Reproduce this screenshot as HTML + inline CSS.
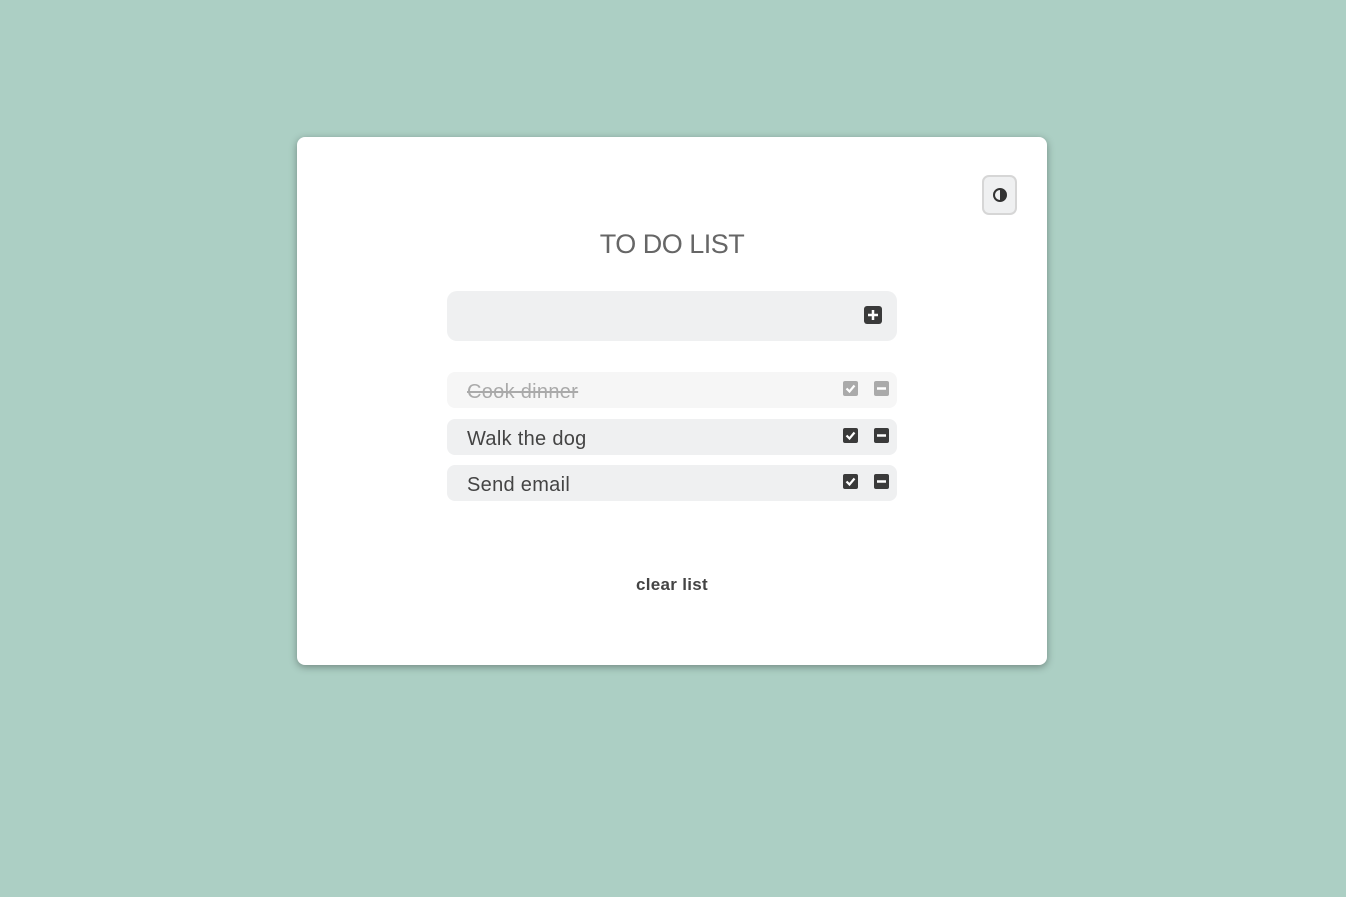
<!DOCTYPE html>
<html><head><style>
body{margin:0;background:#accfc4;width:1346px;height:897px;position:relative;font-family:"Liberation Sans",sans-serif;}
.card{position:absolute;left:297px;top:137px;width:750px;height:528px;background:#fff;border-radius:8px;box-shadow:0 2px 8px rgba(0,0,0,.35);}
.tog{position:absolute;left:685px;top:38px;width:35px;height:40px;border:2px solid #d6d6d6;border-radius:7px;background:#eff0f1;box-sizing:border-box;}
.title{position:absolute;left:0;width:750px;top:92px;text-align:center;font-size:27px;font-weight:300;color:#666;letter-spacing:-0.5px;}
.inp{position:absolute;left:150px;top:154px;width:450px;height:50px;background:#eff0f1;border-radius:10px;}
.item{position:absolute;left:150px;width:450px;height:36px;background:#eff0f1;border-radius:8px;font-size:20px;color:#444;line-height:40px;letter-spacing:0.3px;}
.item span{position:absolute;left:20px;}
.ic{position:absolute;width:15px;height:15px;border-radius:2px;background:#3a3a3a;top:9px;}
.clear{position:absolute;left:0;width:750px;top:438px;text-align:center;font-size:17px;font-weight:bold;color:#444;letter-spacing:0.3px;}
</style></head><body>
<div class="card">
 <div class="tog"><svg style="position:absolute;left:9px;top:11px" width="14" height="14" viewBox="0 0 14 14"><circle cx="7" cy="7" r="6" fill="none" stroke="#333" stroke-width="2"/><path d="M7 1a6 6 0 0 1 0 12z" fill="#333"/></svg></div>
 <div class="title">TO DO LIST</div>
 <div class="inp"><svg style="position:absolute;left:417px;top:15px" width="18" height="18" viewBox="0 0 18 18"><rect width="18" height="18" rx="3" fill="#3a3a3a"/><path d="M9 4v10M4 9h10" stroke="#fff" stroke-width="2.5"/></svg></div>
 <div class="item" style="top:235px;background:#f6f6f6;color:#aaa"><span style="text-decoration:line-through">Cook dinner</span>
  <svg class="ic" style="left:396px;background:#aaa" viewBox="0 0 15 15"><path d="M3.5 7.5l3 3 5-6" stroke="#fff" stroke-width="2.2" fill="none"/></svg>
  <svg class="ic" style="left:427px;background:#aaa" viewBox="0 0 15 15"><path d="M3 7.5h9" stroke="#fff" stroke-width="2.5"/></svg></div>
 <div class="item" style="top:282px"><span>Walk the dog</span>
  <svg class="ic" style="left:396px" viewBox="0 0 15 15"><path d="M3.5 7.5l3 3 5-6" stroke="#fff" stroke-width="2.2" fill="none"/></svg>
  <svg class="ic" style="left:427px" viewBox="0 0 15 15"><path d="M3 7.5h9" stroke="#fff" stroke-width="2.5"/></svg></div>
 <div class="item" style="top:328px"><span>Send email</span>
  <svg class="ic" style="left:396px" viewBox="0 0 15 15"><path d="M3.5 7.5l3 3 5-6" stroke="#fff" stroke-width="2.2" fill="none"/></svg>
  <svg class="ic" style="left:427px" viewBox="0 0 15 15"><path d="M3 7.5h9" stroke="#fff" stroke-width="2.5"/></svg></div>
 <div class="clear">clear list</div>
</div>
</body></html>
